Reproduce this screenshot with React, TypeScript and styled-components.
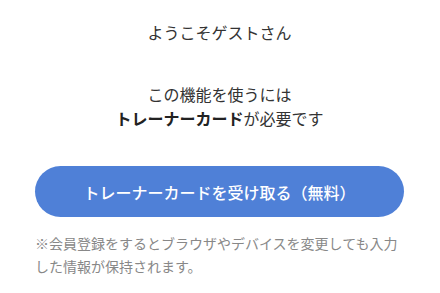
import { createGlobalStyle } from 'styled-components';
import styled from 'styled-components';

const GlobalStyle = createGlobalStyle`
  html, body {
    margin: 0;
    padding: 0;
    background: #ffffff;
  }
  body {
    font-family: "Noto Sans CJK JP", "Noto Sans", sans-serif;
    -webkit-font-smoothing: antialiased;
  }
`;

const Wrapper = styled.div`
  width: 440px;
  height: 293px;
  box-sizing: border-box;
  padding: 20px 36px 0 35px;
  display: flex;
  flex-direction: column;
  align-items: center;
`;

const Greeting = styled.p`
  margin: 0;
  font-size: 16px;
  line-height: 24px;
  color: #333333;
  text-align: center;
`;

const Message = styled.p`
  margin: 38px 0 0;
  font-size: 16px;
  line-height: 24px;
  color: #333333;
  text-align: center;

  strong {
    font-weight: 700;
    color: #222222;
  }
`;

const ReceiveButton = styled.button`
  margin-top: 36px;
  width: 100%;
  height: 51px;
  border: none;
  border-radius: 26px;
  background: #4f80d7;
  color: #ffffff;
  font-family: inherit;
  font-size: 16px;
  font-weight: 500;
  cursor: pointer;
`;

const Note = styled.p`
  margin: 15px 0 0;
  align-self: stretch;
  font-size: 14px;
  line-height: 23px;
  color: #888888;
`;

export default function App() {
  return (
    <>
      <GlobalStyle />
      <Wrapper>
        <Greeting>ようこそゲストさん</Greeting>
        <Message>
          この機能を使うには
          <br />
          <strong>トレーナーカード</strong>が必要です
        </Message>
        <ReceiveButton>トレーナーカードを受け取る（無料）</ReceiveButton>
        <Note>
          ※会員登録をするとブラウザやデバイスを変更しても入力した情報が保持されます。
        </Note>
      </Wrapper>
    </>
  );
}
